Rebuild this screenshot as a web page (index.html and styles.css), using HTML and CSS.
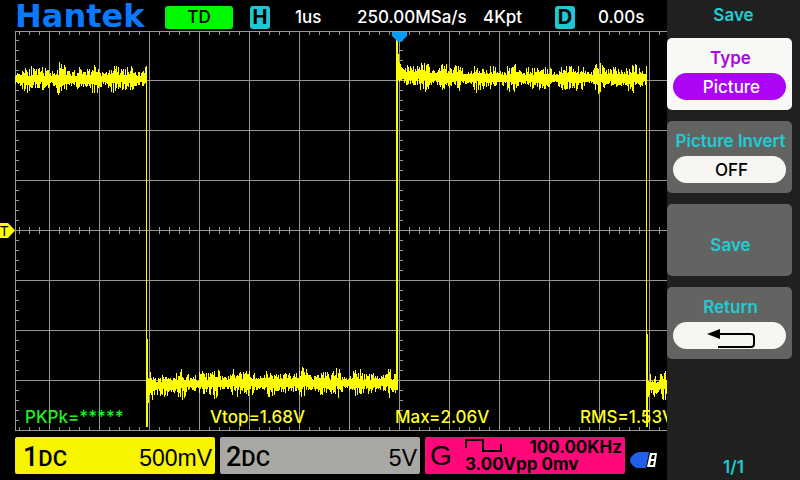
FILE: index.html
```html
<!DOCTYPE html>
<html lang="en">
  <head>
    <meta charset="UTF-8" />
    <meta name="viewport" content="width=device-width, initial-scale=1.0" />
    <title>Hantek</title>
    <link rel="stylesheet" href="styles.css">
  </head>
  <body>
    <main class="scope">
      <header class="topbar">
        <div class="logo">Hantek</div>
        <span class="status">TD</span>
        <span class="badge badge-h">H</span>
        <span class="timebase">1us</span>
        <span class="rate">250.00MSa/s</span>
        <span class="depth">4Kpt</span>
        <span class="badge badge-d">D</span>
        <span class="delay">0.00s</span>
      </header>

      <section class="plot">
        <svg class="screen" viewBox="0 31 667 400" preserveAspectRatio="xMinYMin slice">
          <path class="grid" id="grid"></path>
          <path class="ticks" id="ticks"></path>
          <path class="edge" d="M146.500 66V427M396.500 38V390M646.500 66V427"></path>
          <path class="edge-wide" d="M147 339V427M397 40V390M647 334V427"></path>
          <path class="trace" id="trace"></path>
          <path class="trigger-pos" d="M392 32H407V36L401 42H398L392 36Z"></path>
          <path class="trigger-level" d="M0 223H8L15 230.500L8 238H0Z"></path>
          <text class="trigger-text" x="0" y="236">T</text>
        </svg>
        <div class="measures">
          <span class="off">PKPk=*****</span>
          <span>Vtop=1.68V</span>
          <span>Max=2.06V</span>
          <span>RMS=1.53V</span>
        </div>
      </section>

      <footer class="channels">
        <div class="channel ch1">
          <span class="name"><b>1</b>DC</span>
          <span class="volts">500mV</span>
        </div>
        <div class="channel ch2">
          <span class="name"><b>2</b>DC</span>
          <span class="volts">5V</span>
        </div>
        <div class="channel gen">
          <span class="gen-name">G</span>
          <div class="gen-info">
            <div class="gen-row">
              <svg class="square" viewBox="0 0 38 14"><path d="M1 9V1H18V12H36V5"></path></svg>
              <span>100.00KHz</span>
            </div>
            <div class="gen-row">3.00Vpp 0mv</div>
          </div>
        </div>
        <svg class="usb" viewBox="0 0 28 18">
          <path class="usb-body" d="M9 1H19L16 17H7C3 16 0 12 0 9C1 5 4 2 9 1Z"></path>
          <path class="usb-plug" d="M20 2H27L25 16H17Z"></path>
          <path class="usb-pins" d="M22 4H25L24 8H21ZM21 10H24L23 14H20Z"></path>
        </svg>
      </footer>
    </main>

    <aside class="menu">
      <h1 class="menu-title">Save</h1>
      <button class="item active"><span class="label">Type</span><span class="value">Picture</span></button>
      <button class="item"><span class="label">Picture Invert</span><span class="value">OFF</span></button>
      <button class="item single"><span class="label">Save</span></button>
      <button class="item" aria-label="Return">
        <span class="label">Return</span>
        <span class="value">
          <svg class="arrow" viewBox="0 0 50 20">
            <path class="arrow-line" d="M10 5H44Q47 5 47 8V15Q47 18 44 18H11"></path>
            <path class="arrow-head" d="M0 5L13 0V10Z"></path>
          </svg>
        </span>
      </button>
      <div class="page">1/1</div>
    </aside>

    <script src="scope.js"></script>
  </body>
</html>
```
FILE: styles.css
```css
* {
  box-sizing: border-box;
}
body {
  margin: 0;
  min-height: 100vh;
  display: flex;
  background: #000;
  color: #fff;
  font: 500 17px/20px Inter, "Liberation Sans", sans-serif;
}
.scope {
  flex: 1;
  min-width: 0;
  display: flex;
  flex-direction: column;
}
.topbar {
  height: 31px;
  display: flex;
  align-items: center;
  padding: 3px 0 0 15px;
  white-space: nowrap;
}
.logo {
  width: 150px;
  padding-bottom: 2px;
  color: #0a78ff;
  font: bold 32px/38px "DejaVu Sans", sans-serif;
}
.status {
  width: 68px;
  height: 23px;
  line-height: 23px;
  border-radius: 3px;
  background: #00f800;
  color: #000;
  text-align: center;
}
.badge {
  width: 20px;
  height: 23px;
  border-radius: 3px;
  background: #1cc8d4;
  color: #000;
  font-weight: 700;
  font-size: 20px;
  line-height: 23px;
  text-align: center;
}
.badge-h {
  margin-left: 17px;
}
.timebase {
  margin-left: 25px;
  width: 62px;
}
.rate {
  width: 126px;
}
.depth {
  width: 72px;
}
.delay {
  margin-left: 23px;
}
.plot {
  position: relative;
  flex: 1;
  display: flex;
  overflow: hidden;
}
.screen {
  width: 100%;
  display: block;
}
.grid,
.ticks {
  fill: none;
  stroke: #989898;
  shape-rendering: crispEdges;
}
.trace,
.edge,
.edge-wide {
  fill: none;
  stroke: #ffff00;
  shape-rendering: crispEdges;
}
.edge-wide {
  stroke-width: 2;
}
.trigger-pos {
  fill: #0a9cf0;
}
.trigger-level {
  fill: #ffff00;
}
.trigger-text {
  fill: #000;
  font: 14px "Liberation Sans", sans-serif;
}
.measures {
  position: absolute;
  left: 25px;
  bottom: 4px;
  display: grid;
  grid-template-columns: repeat(4, 185px);
  color: #ffff20;
  white-space: nowrap;
}
.off {
  color: #20f020;
}
.channels {
  height: 49px;
  display: flex;
  align-items: center;
  gap: 5px;
  padding: 0 9px 0 15px;
}
.channel {
  flex: 1 1 200px;
  height: 37px;
  display: flex;
  align-items: center;
  justify-content: space-between;
  border-radius: 2px;
  padding: 4px 3px 0 8px;
  color: #000;
}
.ch1 {
  background: #f8f400;
}
.ch2 {
  padding-left: 6px;
  background: #aaa8a4;
}
.name {
  font: 500 22px/32px Roboto, sans-serif;
}
.name b {
  font-size: 27px;
  font-weight: 500;
}
.volts {
  font: 23px/32px "Liberation Sans", sans-serif;
}
.gen {
  background: #ff0878;
  padding: 0 3px 0 5px;
}
.gen-name {
  font: 28px/36px "Liberation Sans", sans-serif;
}
.gen-info {
  width: 157px;
  font-weight: 700;
  line-height: 17px;
}
.gen-row {
  display: flex;
  justify-content: space-between;
}
.square {
  width: 38px;
  height: 14px;
  fill: none;
  stroke: #000;
  stroke-width: 2;
}
.usb {
  width: 28px;
  height: 18px;
  margin-top: 8px;
}
.usb-body {
  fill: #2060e8;
}
.usb-plug {
  fill: #fff;
}
.usb-pins {
  fill: #000;
}
.menu {
  width: 133px;
  display: flex;
  flex-direction: column;
  background: #202020;
  color: #20ccd4;
  font-weight: 600;
}
.menu-title {
  margin: 0;
  height: 38px;
  padding-top: 5px;
  font-size: 17px;
  font-weight: 600;
  line-height: 20px;
  text-align: center;
}
.item {
  height: 72px;
  margin: 0 8px 11px 0;
  padding: 6px;
  display: flex;
  flex-direction: column;
  border: none;
  border-radius: 5px;
  background: #626462;
  color: inherit;
  font: inherit;
}
.single {
  justify-content: center;
  padding-top: 16px;
}
.label {
  width: 100%;
  height: 29px;
  padding-left: 2px;
  line-height: 29px;
  text-align: center;
  white-space: nowrap;
}
.value {
  width: 100%;
  height: 27px;
  padding-left: 4px;
  display: flex;
  align-items: center;
  justify-content: center;
  border-radius: 14px;
  background: #f8f6f2;
  color: #000;
  font-weight: 500;
}
.active {
  background: #f8f8f4;
  color: #a808e0;
}
.active .value {
  background: #ac04f4;
  color: #fff;
}
.arrow {
  width: 50px;
  height: 20px;
  margin-top: 6px;
}
.arrow-line {
  fill: none;
  stroke: #000;
  stroke-width: 2;
}
.page {
  margin-top: auto;
  padding-bottom: 3px;
  text-align: center;
}
```
FILE: scope.js
```js
const left = 15;
const right = 667;
const top_ = 31;
const bottom = 430;

// graticule: 50px divisions around the centre (399, 230)
let grid = `M${left + 0.5} ${top_}V${bottom}M${left} 31.5H${right}M${left} 430.5H${right}`;
for (let x = 49; x < right; x += 50) grid += `M${x + 0.5} ${top_}V${bottom}`;
for (let y = 80; y < bottom; y += 50) grid += `M${left} ${y + 0.5}H${right}`;
document.querySelector('#grid').setAttribute('d', grid);

let ticks = '';
for (let x = 19; x < right; x += 10) {
  ticks += `M${x + 0.5} 32V35M${x + 0.5} 427V430M${x + 0.5} 227V234`;
}
for (let y = 40; y < bottom; y += 10) {
  ticks += `M16 ${y + 0.5}H19M399 ${y + 0.5}H403`;
}
document.querySelector('#ticks').setAttribute('d', ticks);

let seed = 11;
function random() {
  seed = (seed * 16807) % 2147483647;
  return seed / 2147483647;
}

// one vertical noise stroke per pixel column
function noise(from, to, level) {
  let d = '';
  for (let x = from; x < to; x++) {
    const swell = 0.8 + 0.5 * Math.sin(x / 3.5) * Math.sin(x / 13);
    const up = 3 + random() * 11 * swell;
    const down = 3 + random() * 11 * swell;
    const y = level(x);
    d += `M${x + 0.5} ${Math.round(y - up)}V${Math.round(y + down)}`;
  }
  return d;
}

const settle = (x, edge) => Math.exp((edge - x) / 30);
// overshoot right after the rising edge
const overshoot = 'M398.5 54V80M399.5 62V80M400.5 64V80';
const trace =
  noise(15, 147, () => 79) +
  noise(148, 397, (x) => 383 + 4 * settle(x, 148)) +
  noise(398, 647, (x) => 78 - 4 * settle(x, 398)) +
  noise(648, 667, () => 386) +
  overshoot;
document.querySelector('#trace').setAttribute('d', trace);
```
